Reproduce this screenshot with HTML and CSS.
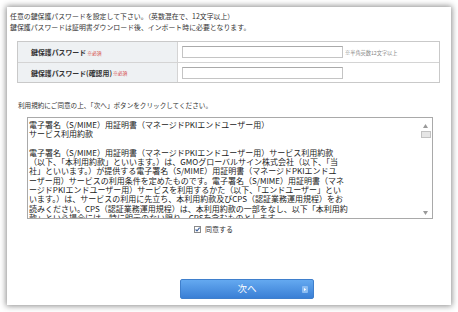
FILE: index.html
```html
<!DOCTYPE html>
<html lang="ja">
<head>
<meta charset="utf-8">
<link rel="stylesheet" href="styles.css">
</head>
<body>
<div class="panel">
  <div class="intro">
    <p>任意の鍵保護パスワードを設定して下さい。（英数混在で、12文字以上）</p>
    <p>鍵保護パスワードは証明書ダウンロード後、インポート時に必要となります。</p>
  </div>
  <div class="form">
    <div class="row">
      <div class="label">鍵保護パスワード<span class="req">※必須</span></div>
      <div class="field"><span class="input"></span><span class="hint">※半角英数12文字以上</span></div>
    </div>
    <div class="row">
      <div class="label">鍵保護パスワード(確認用)<span class="req">※必須</span></div>
      <div class="field"><span class="input"></span></div>
    </div>
  </div>
  <p class="lead">利用規約にご同意の上、「次へ」ボタンをクリックしてください。</p>
  <div class="terms">
    <div class="terms-text">
      <p>電子署名（S/MIME）用証明書（マネージドPKIエンドユーザー用）<br>サービス利用約款</p>
      <p>電子署名（S/MIME）用証明書（マネージドPKIエンドユーザー用）サービス利用約款<br>（以下、「本利用約款」といいます。）は、GMOグローバルサイン株式会社（以下、「当<br>社」といいます。）が提供する電子署名（S/MIME）用証明書（マネージドPKIエンドユ<br>ーザー用）サービスの利用条件を定めたものです。電子署名（S/MIME）用証明書（マネ<br>ージドPKIエンドユーザー用）サービスを利用するかた（以下、「エンドユーザー」とい<br>います。）は、サービスの利用に先立ち、本利用約款及びCPS（認証業務運用規程）をお<br>読みください。CPS（認証業務運用規程）は、本利用約款の一部をなし、以下「本利用約<br>款」という場合には、特に明示のない限り、CPSを含むものとします。</p>
    </div>
    <div class="scrollbar">
      <svg class="sb-arrow" width="5" height="4" viewBox="0 0 5 4"><path d="M0 4 L2.5 0 L5 4 Z" fill="#9a9a9a"/></svg>
      <span class="thumb"></span>
      <span class="sb-fill"></span>
      <svg class="sb-arrow" width="5" height="4" viewBox="0 0 5 4"><path d="M0 0 L2.5 4 L5 0 Z" fill="#9a9a9a"/></svg>
    </div>
  </div>
  <label class="agree"><svg class="check" width="7" height="7" viewBox="0 0 7 7"><rect x="0.5" y="0.5" width="6" height="6" fill="#fff" stroke="#8a8a8a"/><path d="M1.6 3.5 L3 5 L5.6 1.6" fill="none" stroke="#3d5f9a" stroke-width="1.1"/></svg>同意する</label>
  <button class="next" type="button">次へ<span class="arrow"><svg width="6" height="7" viewBox="0 0 6 7"><rect x="0" y="0" width="6" height="7" rx="1" fill="#8cbdf2"/><path d="M2 2 L4.2 3.5 L2 5 Z" fill="#fff"/></svg></span></button>
</div>
</body>
</html>
```
FILE: styles.css
```css
* { box-sizing: border-box; }
html, body { margin: 0; padding: 0; background: #fff; }
body {
  font-family: "Noto Sans CJK JP", "Noto Sans", sans-serif;
  color: #333;
}
p { margin: 0; }

.panel {
  margin: 7px;
  height: 298px;
  background: #fff;
  box-shadow: 0 0 6px 1px rgba(0, 0, 0, 0.45);
  padding: 4px 3px 0;
}

.intro {
  font-size: 6.9px;
  line-height: 11px;
  color: #333;
}

.form {
  margin: 8px 0 0 7px;
  width: 423px;
  border: 1px solid #c9c9c9;
}
.row {
  display: flex;
  height: 20px;
}
.row + .row { border-top: 1px solid #d4d4d4; height: 20px; }
.label {
  width: 160px;
  background: #eef1f3;
  border-right: 1px solid #d4d4d4;
  display: flex;
  align-items: center;
  padding-left: 13px;
  font-size: 6.9px;
  font-weight: bold;
  color: #333;
  white-space: nowrap;
}
.req {
  font-size: 4.8px;
  font-weight: normal;
  color: #d43a3a;
  margin-left: 1px;
}
.field {
  flex: 1;
  display: flex;
  align-items: center;
  padding-left: 4px;
}
.input {
  width: 161px;
  height: 12px;
  border: 1px solid #c4c4c4;
  border-top-color: #aaa;
  background: #fff;
}
.hint {
  font-size: 5.2px;
  color: #888;
  margin-left: 2px;
  white-space: nowrap;
}

.lead {
  margin-top: 17px;
  padding-left: 8px;
  font-size: 6.6px;
  line-height: 10px;
  color: #333;
}

.terms {
  margin: 7px 0 0 17px;
  width: 406px;
  height: 102px;
  border: 1px solid #a9a9a9;
  display: flex;
  overflow: hidden;
}
.terms-text {
  flex: 1;
  overflow: hidden;
  padding: 2px 0 0 1px;
  font-size: 8px;
  line-height: 9.3px;
  color: #222;
  white-space: nowrap;
}
.terms-text p + p { margin-top: 9.3px; }
.scrollbar {
  width: 11px;
  margin-right: 1px;
  display: flex;
  flex-direction: column;
  align-items: center;
  padding: 6px 0 3px;
}
.sb-arrow { display: block; flex: none; }
.thumb {
  display: block;
  width: 10px;
  height: 7px;
  margin-top: 3px;
  border: 1px solid #c2c2c2;
  background: #e6e6e6;
}
.sb-fill { flex: 1; }

.agree {
  display: flex;
  align-items: center;
  margin: 5px 0 0 184px;
  height: 10px;
  font-size: 7px;
  color: #333;
}
.check { display: block; margin-right: 4px; }

.next {
  display: flex;
  align-items: center;
  justify-content: center;
  position: relative;
  margin: 45px 0 0 170px;
  width: 134px;
  height: 20px;
  padding: 0;
  border: 1px solid #3f7fcc;
  border-radius: 2px;
  background: linear-gradient(#64a9f0, #3a7fd5);
  color: #fff;
  font-family: "Noto Sans CJK JP", sans-serif;
  font-size: 9.5px;
  line-height: 1;
}
.arrow {
  position: absolute;
  right: 5px;
  top: 6px;
  display: block;
  width: 6px;
  height: 7px;
}
.arrow svg { display: block; }
```
